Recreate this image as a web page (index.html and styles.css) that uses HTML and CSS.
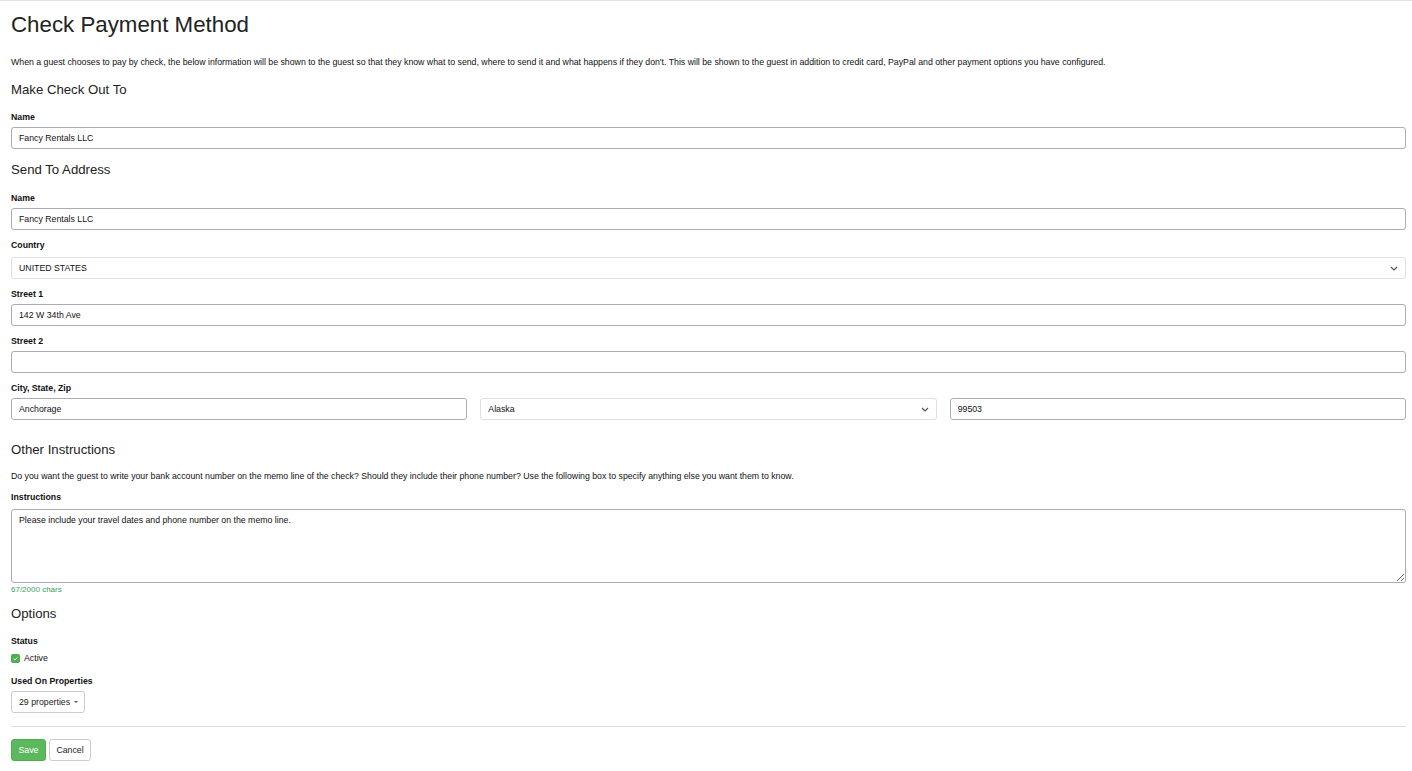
FILE: index.html
```html
<!DOCTYPE html>
<html>
<head>
<meta charset="utf-8">
<link rel="stylesheet" href="styles.css">
</head>
<body>
<div class="page">
  <h1 class="title">Check Payment Method</h1>
  <p class="intro">When a guest chooses to pay by check, the below information will be shown to the guest so that they know what to send, where to send it and what happens if they don't. This will be shown to the guest in addition to credit card, PayPal and other payment options you have configured.</p>

  <h3 class="section first">Make Check Out To</h3>
  <div class="group">
    <label class="lbl">Name</label>
    <input class="field" type="text" value="Fancy Rentals LLC">
  </div>

  <h3 class="section second">Send To Address</h3>
  <div class="group">
    <label class="lbl">Name</label>
    <input class="field" type="text" value="Fancy Rentals LLC">
  </div>
  <div class="group">
    <label class="lbl gap6">Country</label>
    <div class="select-wrap">
      <select class="select"><option>UNITED STATES</option></select>
      <svg class="chev" width="8" height="5" viewBox="0 0 8 5"><path d="M1 1l3 3 3-3" fill="none" stroke="#555" stroke-width="1.2"/></svg>
    </div>
  </div>
  <div class="group">
    <label class="lbl">Street 1</label>
    <input class="field" type="text" value="142 W 34th Ave">
  </div>
  <div class="group">
    <label class="lbl">Street 2</label>
    <input class="field" type="text" value="">
  </div>
  <div class="group">
    <label class="lbl">City, State, Zip</label>
    <div class="row3">
      <input class="field" type="text" value="Anchorage">
      <div class="select-wrap">
        <select class="select"><option>Alaska</option></select>
        <svg class="chev" width="8" height="5" viewBox="0 0 8 5"><path d="M1 1l3 3 3-3" fill="none" stroke="#555" stroke-width="1.2"/></svg>
      </div>
      <input class="field" type="text" value="99503">
    </div>
  </div>

  <h3 class="section spaced">Other Instructions</h3>
  <p class="help">Do you want the guest to write your bank account number on the memo line of the check? Should they include their phone number? Use the following box to specify anything else you want them to know.</p>
  <div class="group tight">
    <label class="lbl gap6">Instructions</label>
    <textarea class="area">Please include your travel dates and phone number on the memo line.</textarea>
    <div class="counter">67/2000 chars</div>
  </div>

  <h3 class="section options">Options</h3>
  <div class="group status">
    <label class="lbl">Status</label>
    <div class="check-row">
      <span class="cbox"><svg width="9" height="9" viewBox="0 0 9 9"><path d="M2.6 4.8l1.3 1.2 2.5-2.6" fill="none" stroke="#fff" stroke-width="1"/></svg></span>
      <span class="check-text">Active</span>
    </div>
  </div>
  <div class="group">
    <label class="lbl">Used On Properties</label>
    <button class="dd">29 properties <span class="caret"></span></button>
  </div>

  <hr class="sep">
  <div class="actions">
    <button class="btn btn-save">Save</button>
    <button class="btn btn-cancel">Cancel</button>
  </div>
</div>
</body>
</html>
```

FILE: styles.css
```css
html, body {
  margin: 0;
  padding: 0;
  background: #fff;
}
body {
  font-family: "Liberation Sans", Arial, sans-serif;
  color: #222;
  border-top: 1px solid #e3e3e3;
}
.page {
  padding: 0 6px 0 11px;
}
.title {
  font-size: 22.3px;
  font-weight: normal;
  line-height: 26px;
  margin: 11px 0 0 0;
  color: #222;
}
.intro {
  font-size: 8.75px;
  line-height: 12px;
  margin: 18px 0 0 0;
  color: #111;
}
.section {
  font-size: 13.2px;
  font-weight: normal;
  line-height: 16px;
  margin: 12px 0 14px 0;
  color: #222;
}
.section.first {
  margin-top: 14px;
  margin-bottom: 13px;
}
.section.second {
  margin-top: 13px;
}
.section.spaced {
  margin-top: 22px;
}
.section.options {
  margin-top: 11px;
  margin-bottom: 13px;
}
.group {
  margin-bottom: 9px;
}
.group.status {
  margin-bottom: 11px;
}
.group.tight {
  margin-bottom: 0;
}
.lbl {
  display: block;
  font-size: 8.75px;
  font-weight: bold;
  line-height: 12px;
  margin-bottom: 4px;
  color: #111;
}
.lbl.gap6 {
  margin-bottom: 6px;
}
.field {
  display: block;
  box-sizing: border-box;
  width: 100%;
  height: 22px;
  margin: 0;
  padding: 0 7px;
  border: 1px solid #a9adb3;
  border-radius: 3px;
  font-family: "Liberation Sans", Arial, sans-serif;
  font-size: 8.75px;
  color: #111;
  background: #fff;
  outline: none;
}
.select-wrap {
  position: relative;
}
.select {
  display: block;
  box-sizing: border-box;
  width: 100%;
  height: 22px;
  margin: 0;
  padding: 0 7px;
  border: 1px solid #e0e0e0;
  border-radius: 3px;
  font-family: "Liberation Sans", Arial, sans-serif;
  font-size: 8.75px;
  color: #111;
  background: #fff;
  -webkit-appearance: none;
  appearance: none;
  outline: none;
}
.chev {
  position: absolute;
  right: 8px;
  top: 9px;
  pointer-events: none;
}
.row3 {
  display: grid;
  grid-template-columns: 1fr 1fr 1fr;
  column-gap: 13px;
}
.help {
  font-size: 8.75px;
  line-height: 12px;
  margin: -2px 0 9px 0;
  color: #111;
}
.area {
  display: block;
  box-sizing: border-box;
  width: 100%;
  height: 74px;
  margin: 0;
  padding: 4px 7px;
  border: 1px solid #a9adb3;
  border-radius: 3px;
  font-family: "Liberation Sans", Arial, sans-serif;
  font-size: 8.75px;
  line-height: 12px;
  color: #111;
  outline: none;
  resize: vertical;
}
.counter {
  font-size: 8px;
  line-height: 10px;
  margin-top: 2px;
  color: #3aa068;
}
.check-row {
  display: flex;
  align-items: center;
  height: 12px;
  padding-top: 1px;
}
.cbox {
  display: inline-flex;
  width: 9px;
  height: 9px;
  border-radius: 2px;
  background: #4caf50;
  margin-right: 4px;
}
.check-text {
  font-size: 8.75px;
  line-height: 12px;
  color: #111;
}
.dd {
  display: inline-flex;
  align-items: center;
  height: 22px;
  box-sizing: border-box;
  padding: 0 6px 0 7px;
  border: 1px solid #ccc;
  border-radius: 3px;
  background: #fff;
  font-family: "Liberation Sans", Arial, sans-serif;
  font-size: 8.75px;
  color: #222;
  margin: 0;
}
.caret {
  display: inline-block;
  width: 0;
  height: 0;
  margin-left: 4px;
  border-left: 2px solid transparent;
  border-right: 2px solid transparent;
  border-top: 2px solid #555;
}
.sep {
  border: 0;
  border-top: 1px solid #ddd;
  margin: 13px 0 12px 0;
}
.actions {
  display: flex;
  gap: 3px;
}
.btn {
  height: 22px;
  box-sizing: border-box;
  padding: 0 6px;
  border-radius: 3px;
  font-family: "Liberation Sans", Arial, sans-serif;
  font-size: 8.75px;
  margin: 0;
}
.btn-save {
  background: #5cb85c;
  border: 1px solid #4cae4c;
  color: #fff;
  width: 35px;
}
.btn-cancel {
  background: #fff;
  border: 1px solid #ccc;
  color: #222;
  width: 42px;
}
```
